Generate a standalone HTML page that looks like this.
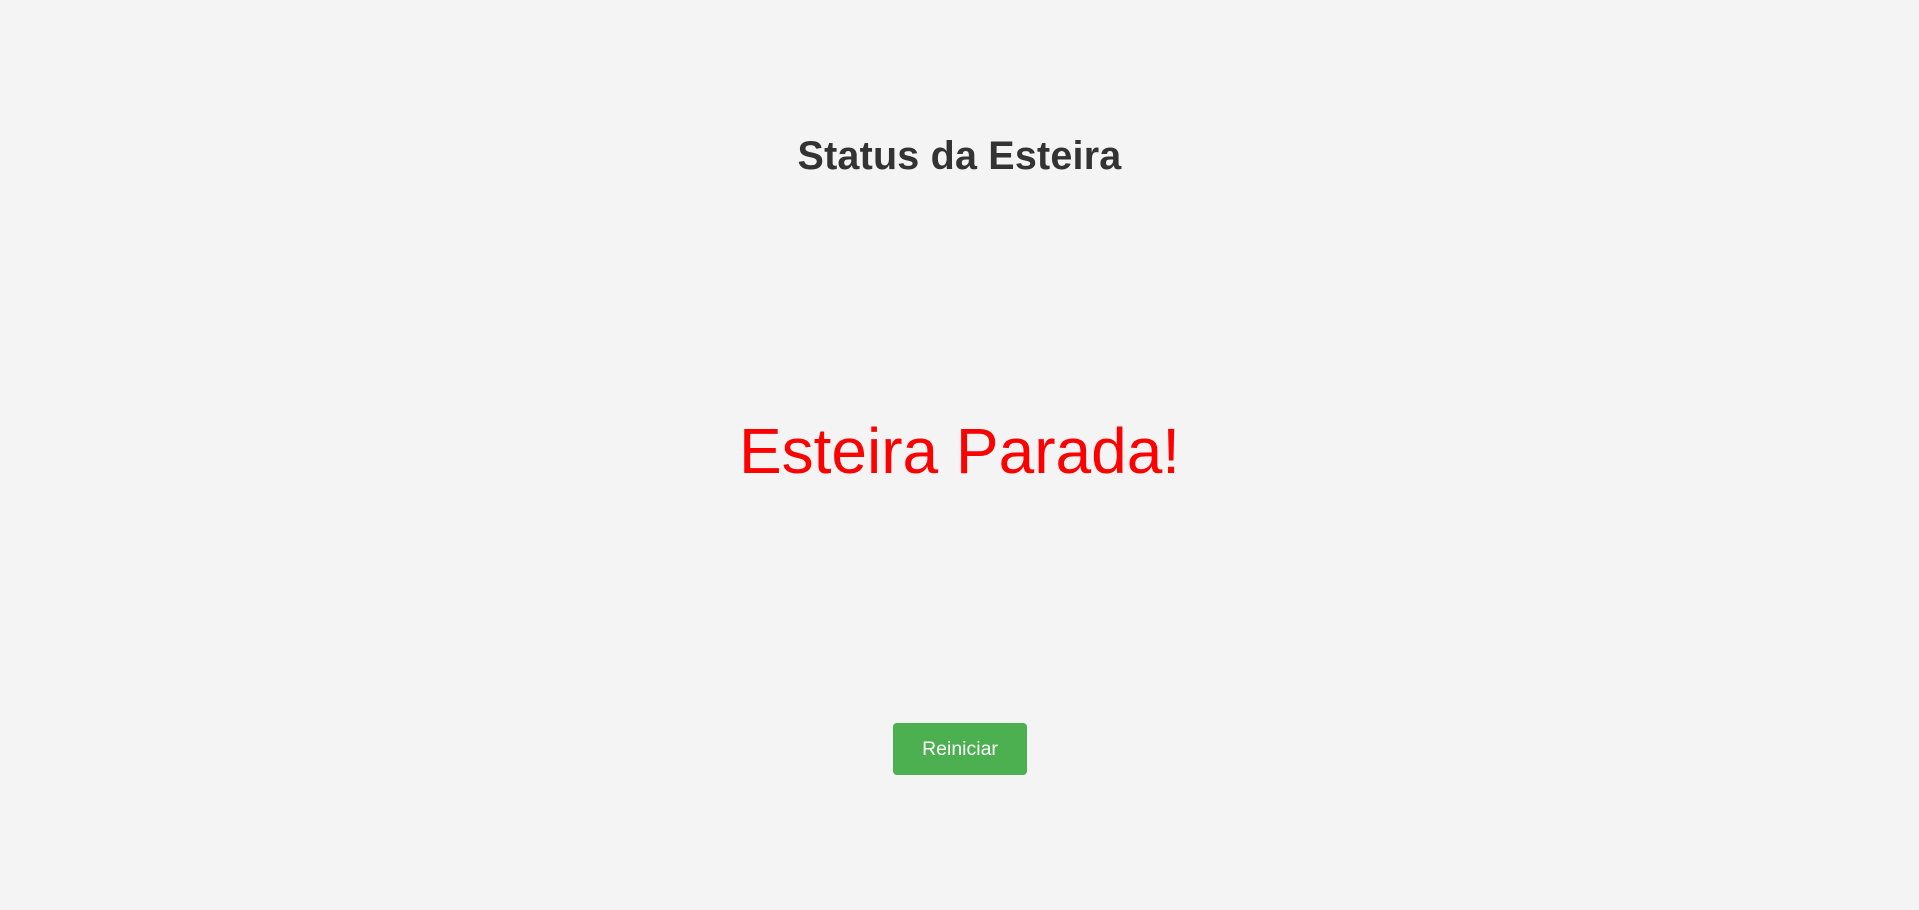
<!DOCTYPE html>
<html><head><meta charset="utf-8"><style>
html,body{margin:0;padding:0;width:1919px;height:910px;background:#f4f4f4;overflow:hidden;font-family:"Liberation Sans",Arial,sans-serif}
.t{position:absolute;left:0;width:1919px;text-align:center;line-height:1;margin:0}
h1.t{top:137px;font-size:39.5px;font-weight:bold;color:#333;letter-spacing:0.2px}
.r{top:419px;font-size:64px;color:#ff0000}
.b{position:absolute;left:893px;top:723px;width:134px;height:52px;background:#4caf50;border-radius:4px;color:#fff;font-size:19.5px;line-height:52px;text-align:center}
</style></head><body>
<h1 class="t">Status da Esteira</h1>
<div class="t r">Esteira Parada!</div>
<div class="b">Reiniciar</div>
</body></html>
